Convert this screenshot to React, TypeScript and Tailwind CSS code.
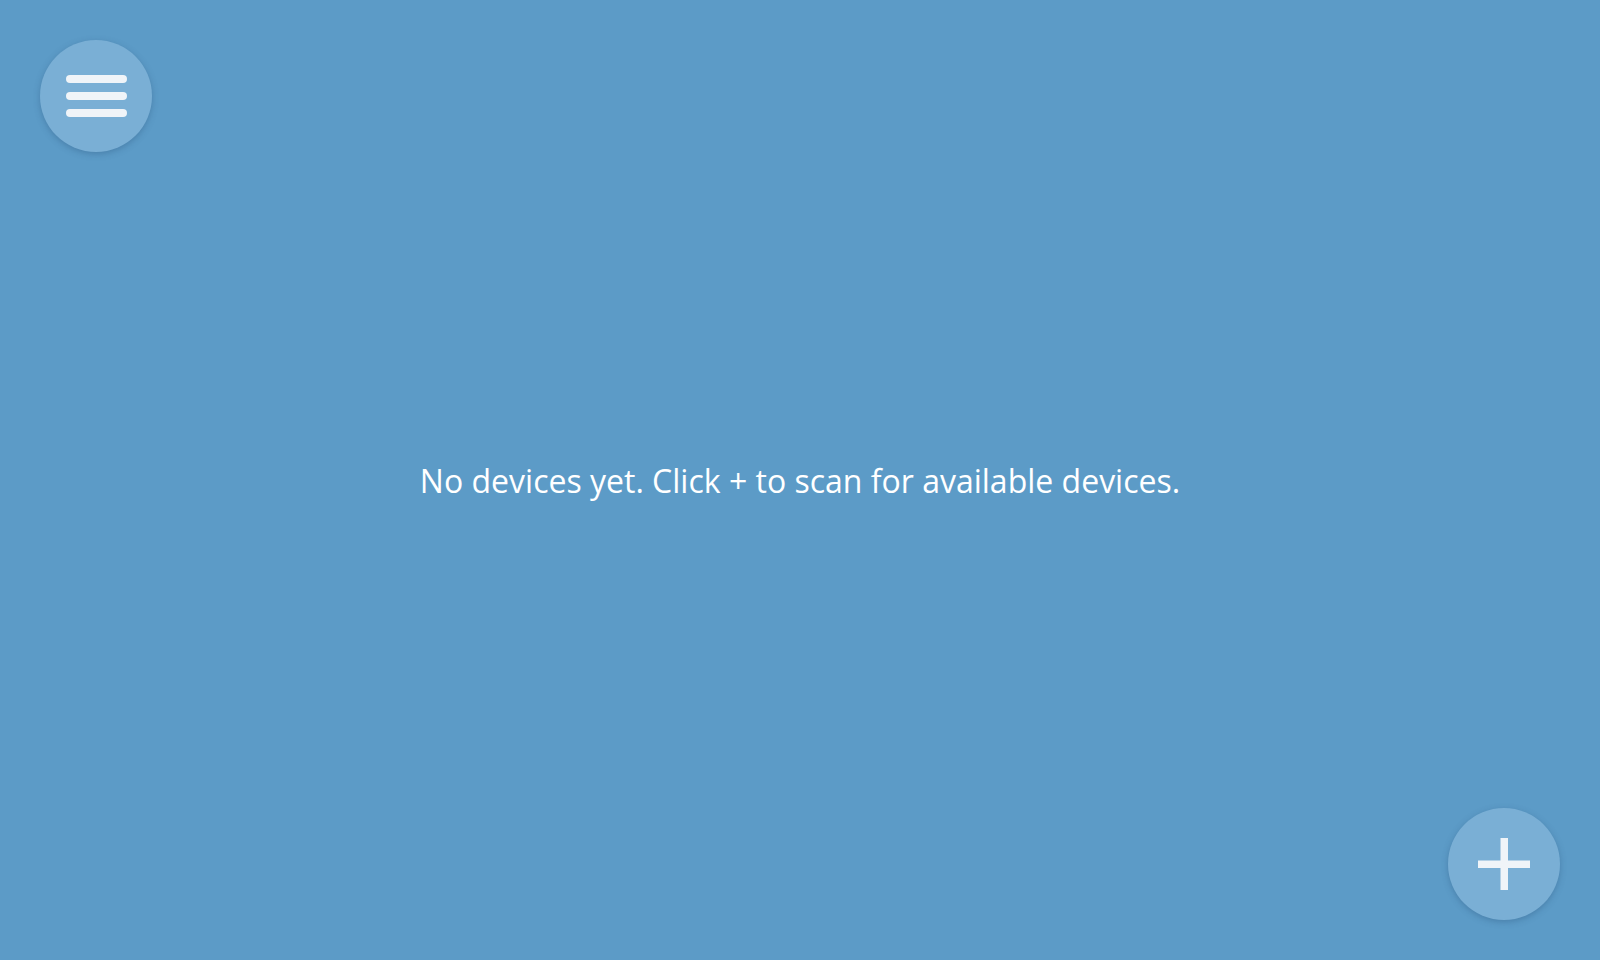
export default function App() {
  return (
    <div className="relative flex h-[960px] w-[1600px] items-center justify-center overflow-hidden bg-[#5c9bc7] font-['Open_Sans',sans-serif]">
      <button
        type="button"
        aria-label="Menu"
        className="absolute left-10 top-10 flex h-[112px] w-[112px] flex-col items-center justify-center gap-[9px] rounded-full bg-[#7aafd5] shadow-[0_2px_6px_rgba(40,80,120,0.35)]"
      >
        <span className="block h-2 w-[61px] rounded-full bg-[#f0f4f8]" />
        <span className="block h-2 w-[61px] rounded-full bg-[#f0f4f8]" />
        <span className="block h-2 w-[61px] rounded-full bg-[#f0f4f8]" />
      </button>

      <p className="pt-[2px] text-[32px] leading-none text-white">
        No devices yet. Click + to scan for available devices.
      </p>

      <button
        type="button"
        aria-label="Add device"
        className="absolute bottom-10 right-10 flex h-[112px] w-[112px] items-center justify-center rounded-full bg-[#7aafd5] shadow-[0_2px_6px_rgba(40,80,120,0.35)]"
      >
        <svg width="52" height="52" viewBox="0 0 52 52">
          <rect x="22.5" y="0" width="7.5" height="52" fill="#f0f4f8" />
          <rect x="0" y="22.5" width="52" height="7.5" fill="#f0f4f8" />
        </svg>
      </button>
    </div>
  );
}
